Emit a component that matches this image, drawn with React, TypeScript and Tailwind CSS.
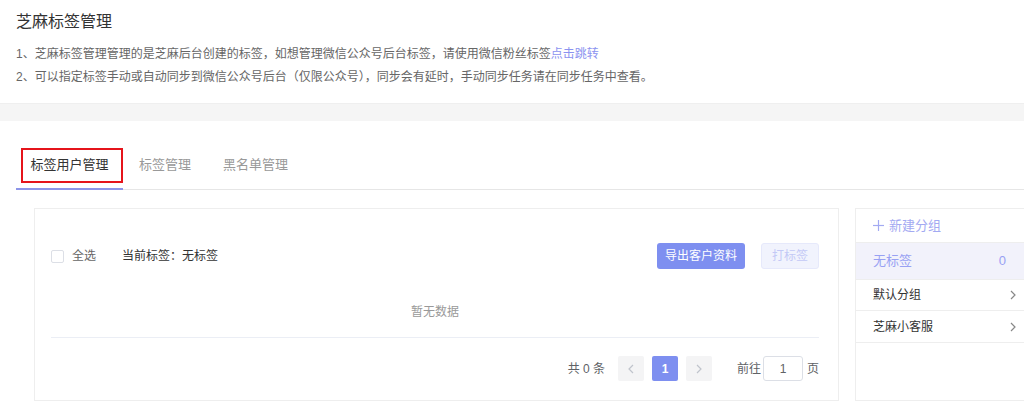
import React from "react";

const FONT = { fontFamily: '"Liberation Sans", "Noto Sans CJK SC", sans-serif' };

function ChevronLeft({ color = "#c0c4cc" }: { color?: string }) {
  return (
    <svg width="6" height="10" viewBox="0 0 6 10" fill="none">
      <polyline points="5,1 1,5 5,9" stroke={color} strokeWidth="1.2" />
    </svg>
  );
}
function ChevronRight({ color = "#c0c4cc" }: { color?: string }) {
  return (
    <svg width="6" height="10" viewBox="0 0 6 10" fill="none">
      <polyline points="1,1 5,5 1,9" stroke={color} strokeWidth="1.2" />
    </svg>
  );
}

export default function App() {
  return (
    <div className="w-[1024px] h-[404px] overflow-hidden bg-white text-[12px] text-[#333]" style={FONT}>
      {/* Header */}
      <div className="px-4 pt-[10px] pb-[14px]">
        <div className="text-[16px] leading-[24px] text-[#333]">芝麻标签管理</div>
        <div className="mt-[9px] text-[12px] leading-[23px] text-[#666]">
          <div>
            1、芝麻标签管理管理的是芝麻后台创建的标签，如想管理微信公众号后台标签，请使用微信粉丝标签
            <span className="text-[#8b93f0]">点击跳转</span>
          </div>
          <div>2、可以指定标签手动或自动同步到微信公众号后台（仅限公众号），同步会有延时，手动同步任务请在同步任务中查看。</div>
        </div>
      </div>
      <div className="h-[18px] bg-[#f5f5f5] border-t border-[#efefef]" />

      {/* Tabs */}
      <div className="pl-4 pt-[19px]">
        <div className="relative flex h-[50px] border-b border-[#e6e6e6]">
          <div className="relative flex h-[49px] w-[107px] items-center justify-center text-[13px] text-[#333]">
            标签用户管理
            <div className="absolute bottom-[-1px] left-0 right-0 h-[2px] bg-[#8d95e8]" />
          </div>
          <div className="flex h-[49px] items-center px-[16px] text-[13px] text-[#999]">标签管理</div>
          <div className="flex h-[49px] items-center px-[16px] text-[13px] text-[#999]">黑名单管理</div>
          <div className="pointer-events-none absolute left-[5px] top-[8px] h-[35px] w-[102px] border-2 border-[#e5141b]" />
        </div>
      </div>

      {/* Content */}
      <div className="mt-[18px] flex gap-[16px] pl-[34px]">
        {/* Left card */}
        <div className="h-[193px] w-[805px] shrink-0 border border-[#eeeeee] pl-[16px] pr-[19px] pt-[34px]">
          <div className="flex h-[26px] items-center">
            <div className="h-[13px] w-[13px] rounded-[2px] border border-[#dcdfe6] bg-white" />
            <span className="ml-[8px] text-[12px] text-[#666]">全选</span>
            <span className="ml-[26px] text-[12px] text-[#333]">当前标签：无标签</span>
            <div className="ml-auto flex items-center gap-[16px]">
              <div className="flex h-[26px] w-[88px] items-center justify-center rounded-[3px] bg-[#7e8ff0] text-[12px] text-white">
                导出客户资料
              </div>
              <div className="flex h-[26px] w-[58px] items-center justify-center rounded-[3px] border border-[#e6e9fb] bg-[#f1f3fd] text-[12px] text-[#c3c9f6]">
                打标签
              </div>
            </div>
          </div>
          <div className="flex h-[69px] items-end justify-center border-b border-[#ebeef5] pb-[16px]">
            <span className="text-[12px] leading-[18px] text-[#999]">暂无数据</span>
          </div>
          <div className="mt-[18px] flex h-[25px] items-center justify-end text-[12px] text-[#606266]">
            <span>共 0 条</span>
            <div className="ml-[13px] flex h-[25px] w-[26px] items-center justify-center rounded-[2px] bg-[#f4f4f5]">
              <ChevronLeft />
            </div>
            <div className="ml-[8px] flex h-[25px] w-[26px] items-center justify-center rounded-[2px] bg-[#7e8ff0] text-[12px] font-bold text-white">
              1
            </div>
            <div className="ml-[8px] flex h-[25px] w-[26px] items-center justify-center rounded-[2px] bg-[#f4f4f5]">
              <ChevronRight />
            </div>
            <span className="ml-[25px]">前往</span>
            <div className="ml-[2px] flex h-[25px] w-[40px] items-center justify-center rounded-[3px] border border-[#dcdfe6] text-[#606266]">
              1
            </div>
            <span className="ml-[4px]">页</span>
          </div>
        </div>

        {/* Right card */}
        <div className="h-[193px] flex-1 border border-r-0 border-[#eeeeee]">
          <div className="flex h-[34px] items-center border-b border-[#eeeeee] pl-[17px] text-[13px] text-[#a3aaf2]">
            <svg width="11" height="11" viewBox="0 0 11 11" fill="none">
              <line x1="5.5" y1="0" x2="5.5" y2="11" stroke="#a3aaf2" strokeWidth="1.2" />
              <line x1="0" y1="5.5" x2="11" y2="5.5" stroke="#a3aaf2" strokeWidth="1.2" />
            </svg>
            <span className="ml-[5px]">新建分组</span>
          </div>
          <div className="flex h-[36px] items-center justify-between bg-[#f2f2fb] pl-[17px] pr-[18px] text-[13px] text-[#98a1f3]">
            <span>无标签</span>
            <span>0</span>
          </div>
          <div className="flex h-[32px] items-center justify-between border-y border-[#eeeeee] pl-[17px] pr-[8px] text-[12px] text-[#333]">
            <span>默认分组</span>
            <ChevronRight color="#888" />
          </div>
          <div className="flex h-[32px] items-center justify-between border-b border-[#eeeeee] pl-[17px] pr-[8px] text-[12px] text-[#333]">
            <span>芝麻小客服</span>
            <ChevronRight color="#888" />
          </div>
        </div>
      </div>
    </div>
  );
}
